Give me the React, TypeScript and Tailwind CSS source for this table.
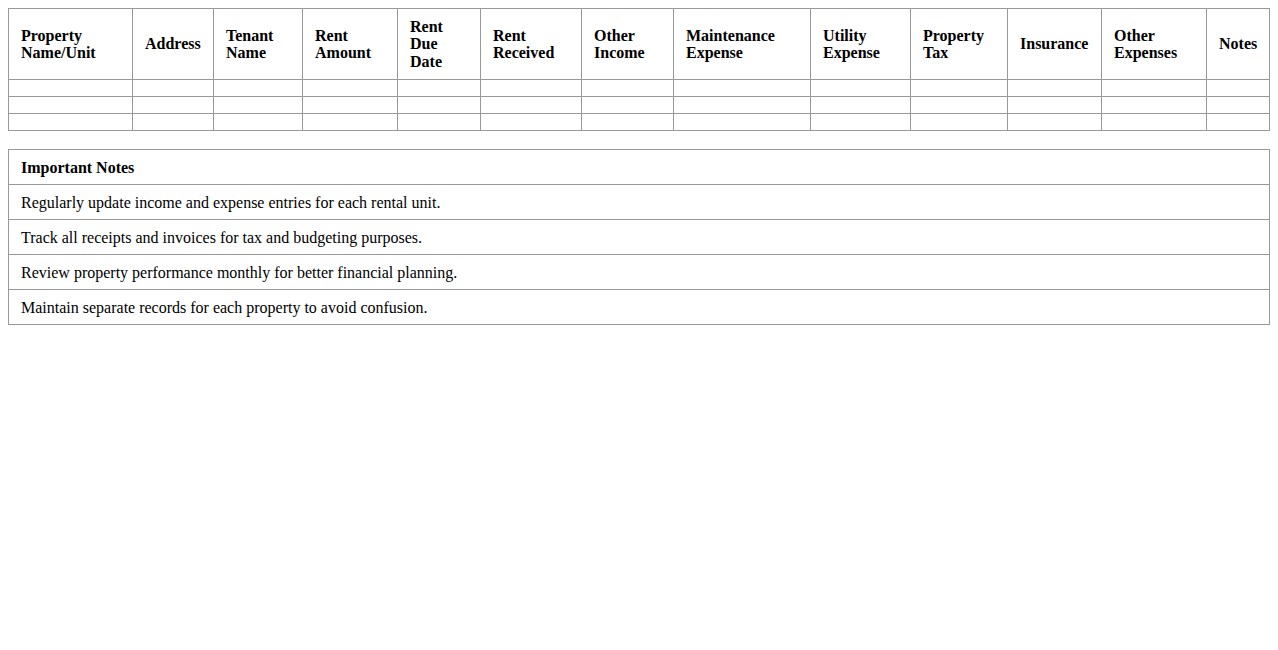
const columns = [
  { label: ['Property', 'Name/Unit'], w: 'w-[124px]' },
  { label: ['Address'], w: 'w-[81px]' },
  { label: ['Tenant', 'Name'], w: 'w-[89px]' },
  { label: ['Rent', 'Amount'], w: 'w-[95px]' },
  { label: ['Rent', 'Due', 'Date'], w: 'w-[83px]' },
  { label: ['Rent', 'Received'], w: 'w-[101px]' },
  { label: ['Other', 'Income'], w: 'w-[92px]' },
  { label: ['Maintenance', 'Expense'], w: 'w-[137px]' },
  { label: ['Utility', 'Expense'], w: 'w-[100px]' },
  { label: ['Property', 'Tax'], w: 'w-[97px]' },
  { label: ['Insurance'], w: 'w-[94px]' },
  { label: ['Other', 'Expenses'], w: 'w-[105px]' },
  { label: ['Notes'], w: 'w-[63px]' },
];

const notes = [
  'Regularly update income and expense entries for each rental unit.',
  'Track all receipts and invoices for tax and budgeting purposes.',
  'Review property performance monthly for better financial planning.',
  'Maintain separate records for each property to avoid confusion.',
];

export default function App() {
  return (
    <div className="min-h-[650px] bg-white p-2 text-[16px] leading-[17.5px] text-black [font-family:'Liberation_Serif',serif]">
      <table className="w-full table-fixed border-collapse border border-[#999]">
        <thead>
          <tr>
            {columns.map((col, i) => (
              <th
                key={i}
                className={`${col.w} h-[71px] border border-[#999] px-3 text-left align-middle font-bold`}
              >
                {col.label.map((l, j) => (
                  <div key={j}>{l}</div>
                ))}
              </th>
            ))}
          </tr>
        </thead>
        <tbody>
          {[0, 1, 2].map((r) => (
            <tr key={r}>
              {columns.map((_, i) => (
                <td key={i} className="h-[17px] border border-[#999] p-0" />
              ))}
            </tr>
          ))}
        </tbody>
      </table>

      <table className="mt-[18px] w-full border-collapse border border-[#999]">
        <tbody>
          <tr>
            <td className="h-[35px] border border-[#999] px-3 pt-[1px] align-middle font-bold">
              Important Notes
            </td>
          </tr>
          {notes.map((n, i) => (
            <tr key={i}>
              <td className="h-[35px] border border-[#999] px-3 pt-[1px] align-middle">{n}</td>
            </tr>
          ))}
        </tbody>
      </table>
    </div>
  );
}
